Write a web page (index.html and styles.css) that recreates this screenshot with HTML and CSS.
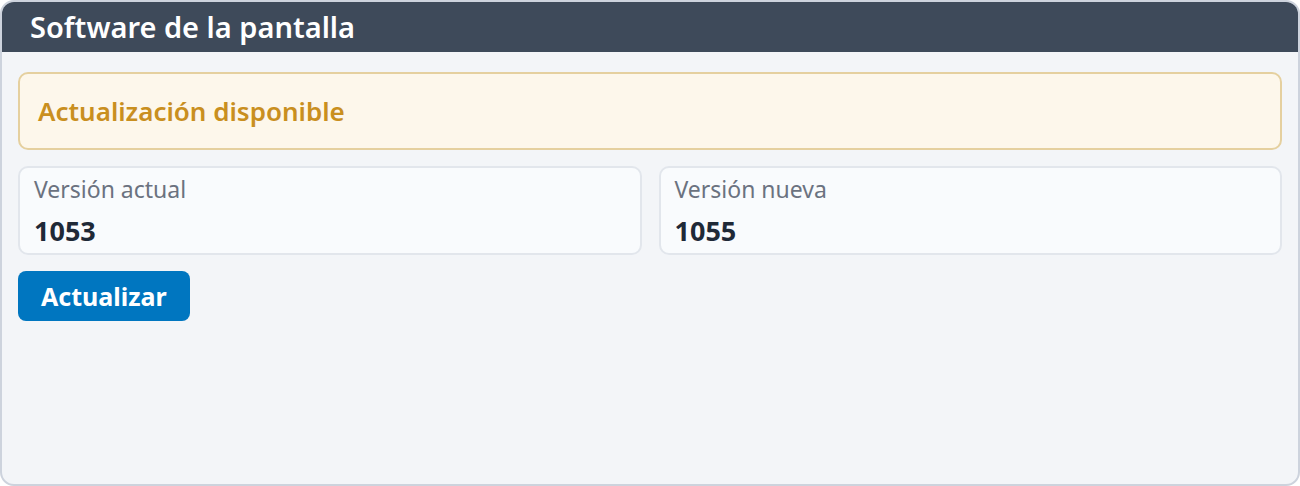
FILE: index.html
```html
<!DOCTYPE html>
<html lang="es">
<head>
    <meta charset="UTF-8">
    <meta name="viewport" content="width=device-width, initial-scale=1.0">
    <title>Software de la pantalla</title>
    <link rel="stylesheet" href="styles.css">
</head>
<body>
    <div class="panel">
        <div class="panel-header">
            <h2>Software de la pantalla</h2>
        </div>
        <div class="panel-body">
            <div class="alert">Actualización disponible</div>

            <div class="version-grid">
                <div class="version-card">
                    <div class="label">Versión actual</div>
                    <div class="value">1053</div>
                </div>
                <div class="version-card">
                    <div class="label">Versión nueva</div>
                    <div class="value">1055</div>
                </div>
            </div>

            <button class="btn">Actualizar</button>
        </div>
    </div>
</body>
</html>
```

FILE: styles.css
```css
body {
    margin: 0;
    font-family: 'Noto Sans', 'Open Sans', sans-serif;
}

.panel {
    height: 486px;
    box-sizing: border-box;
    border: 2px solid #cdd3dd;
    border-radius: 14px;
    overflow: hidden;
    background: #f3f5f8;
    display: flex;
    flex-direction: column;
}

.panel-header {
    background: #3e4a5a;
    height: 50px;
    display: flex;
    align-items: center;
    padding: 0 28px;
}

.panel-header h2 {
    margin: 0;
    margin-top: -2px;
    color: #ffffff;
    font-size: 29px;
    font-weight: 600;
}

.panel-body {
    padding: 20px 16px;
    display: flex;
    flex-direction: column;
    align-items: flex-start;
    gap: 16px;
}

.alert {
    align-self: stretch;
    height: 78px;
    box-sizing: border-box;
    display: flex;
    align-items: center;
    padding: 0 18px;
    background: #fdf7eb;
    border: 2px solid #e5d09f;
    border-radius: 10px;
    color: #c98f1f;
    font-size: 26px;
    font-weight: 600;
}

.version-grid {
    align-self: stretch;
    display: grid;
    grid-template-columns: repeat(2, 1fr);
    gap: 17px;
}

.version-card {
    height: 89px;
    box-sizing: border-box;
    padding: 7px 14px;
    background: #f9fbfd;
    border: 2px solid #e2e6ec;
    border-radius: 10px;
}

.label {
    color: #6b7280;
    font-size: 23px;
    line-height: 28px;
}

.value {
    margin-top: 12px;
    color: #1f2937;
    font-size: 27px;
    font-weight: 700;
    line-height: 32px;
}

.btn {
    height: 50px;
    padding: 0 23px;
    border: none;
    border-radius: 8px;
    background: #0076c0;
    color: #ffffff;
    font-family: inherit;
    font-size: 25px;
    font-weight: 700;
}
```
